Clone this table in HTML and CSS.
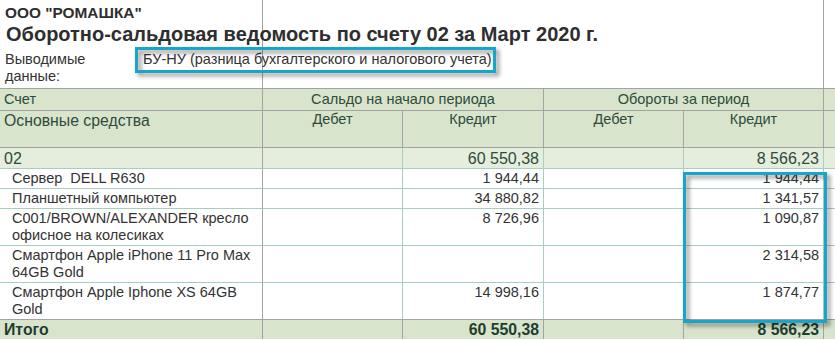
FILE: index.html
```html
<!DOCTYPE html>
<html lang="ru">
<head>
<meta charset="utf-8">
<title>Оборотно-сальдовая ведомость по счету 02</title>
<link rel="stylesheet" href="styles.css">
</head>
<body>
<div class="sheet">
  <div class="head">
    <div class="org">ООО "РОМАШКА"</div>
    <h1 class="title">Оборотно-сальдовая ведомость по счету 02 за Март 2020 г.</h1>
    <div class="params">
      <div class="param-label">Выводимые<br>данные:</div>
      <div class="param-value">БУ-НУ (разница бухгалтерского и налогового учета)</div>
    </div>
  </div>
  <table class="report">
    <colgroup>
      <col class="c-name"><col class="c-num"><col class="c-num2"><col class="c-num"><col class="c-num"><col class="c-tail">
    </colgroup>
    <thead>
      <tr class="h1">
        <td>Счет</td>
        <td colspan="2" class="center">Сальдо на начало периода</td>
        <td colspan="2" class="center">Обороты за период</td>
        <td></td>
      </tr>
      <tr class="h2">
        <td class="section">Основные средства</td>
        <td class="center">Дебет</td>
        <td class="center">Кредит</td>
        <td class="center">Дебет</td>
        <td class="center">Кредит</td>
        <td></td>
      </tr>
    </thead>
    <tbody>
      <tr class="group">
        <td>02</td><td></td><td class="num">60 550,38</td><td></td><td class="num">8 566,23</td><td></td>
      </tr>
      <tr>
        <td class="item">Сервер&nbsp; DELL R630</td><td></td><td class="num">1 944,44</td><td></td><td class="num">1 944,44</td><td></td>
      </tr>
      <tr>
        <td class="item">Планшетный компьютер</td><td></td><td class="num">34 880,82</td><td></td><td class="num">1 341,57</td><td></td>
      </tr>
      <tr>
        <td class="item">C001/BROWN/ALEXANDER кресло офисное на колесиках</td><td></td><td class="num">8 726,96</td><td></td><td class="num">1 090,87</td><td></td>
      </tr>
      <tr>
        <td class="item">Смартфон Apple iPhone 11 Pro Max 64GB Gold</td><td></td><td class="num"></td><td></td><td class="num">2 314,58</td><td></td>
      </tr>
      <tr>
        <td class="item">Смартфон Apple Iphone XS 64GB Gold</td><td></td><td class="num">14 998,16</td><td></td><td class="num">1 874,77</td><td></td>
      </tr>
    </tbody>
    <tfoot>
      <tr class="total">
        <td>Итого</td><td></td><td class="num">60 550,38</td><td></td><td class="num">8 566,23</td><td></td>
      </tr>
    </tfoot>
  </table>
  <div class="mark mark-param"></div>
  <div class="mark mark-credit"></div>
</div>
</body>
</html>
```
FILE: styles.css
```css
html, body {
  margin: 0;
  padding: 0;
  background: #ffffff;
  overflow: hidden;
}

body {
  font-family: "Liberation Sans", Arial, sans-serif;
  font-size: 14.5px;
  color: #333333;
}

.sheet {
  position: relative;
  width: 835px;
}

.head {
  box-sizing: border-box;
  height: 88px;
  padding: 4px 0 0 5px;
  background-image:
    linear-gradient(#a3a3a3, #a3a3a3),
    linear-gradient(#a3a3a3, #a3a3a3);
  background-size: 1px 100%, 1px 100%;
  background-position: 262px 0, 823px 0;
  background-repeat: no-repeat;
}

.org {
  font-weight: bold;
  font-size: 15.4px;
  line-height: 18px;
  color: #2e2e2e;
}

.title {
  margin: 1px 0 0 1px;
  font-size: 20px;
  line-height: 22px;
  font-weight: bold;
  color: #2e2e2e;
}

.params {
  display: flex;
  margin-top: 6px;
  line-height: 17px;
}

.param-label {
  width: 138px;
  flex: none;
}

.report {
  width: 835px;
  table-layout: fixed;
  border-collapse: separate;
  border-spacing: 0;
  border-top: 1px solid #a3a3a3;
}

.c-name { width: 263px; }
.c-num { width: 140px; }
.c-num2 { width: 141px; }
.c-tail { width: 11px; }

.report td {
  padding: 1px 4px 1px 4px;
  line-height: 17px;
  vertical-align: top;
  border-right: 1px solid #a8cdc1;
  border-bottom: 1px solid #a8cdc1;
  white-space: normal;
  overflow: hidden;
}

.report td:first-child {
  border-right-color: #a3a3a3;
}

.report td:last-child {
  border-right: none;
}

.report thead td {
  background: #d9e4cc;
  color: #2d4b3c;
  border-color: #a3a3a3;
}

.report .h1 td {
  padding-top: 2px;
  padding-bottom: 2px;
}

.report .h2 td {
  height: 37px;
  box-sizing: border-box;
  padding-top: 0;
}

.report .h2 td.section {
  font-size: 15.8px;
  line-height: 19px;
}

.report .group td {
  background: #e5eedc;
  color: #2d4b3c;
  font-size: 16px;
  padding-top: 2px;
  padding-bottom: 1px;
  height: 21px;
  box-sizing: border-box;
}

.report .total td {
  background: #d9e4cc;
  color: #1e3e2e;
  font-size: 15.8px;
  font-weight: bold;
  border-bottom: none;
  border-top: 1px solid #a3a3a3;
  border-right-color: #a3a3a3;
}

.report tbody tr:last-child td {
  border-bottom: none;
}

.center {
  text-align: center;
}

.report td.num {
  text-align: right;
}

.report td.item {
  padding-left: 12px;
}

.mark {
  position: absolute;
  box-sizing: border-box;
  border: 3px solid #17a6c9;
  filter: drop-shadow(3px 3px 2px rgba(0, 0, 0, 0.45));
  pointer-events: none;
}

.mark-param {
  left: 135px;
  top: 47px;
  width: 361px;
  height: 26px;
}

.mark-credit {
  left: 683px;
  top: 172px;
  width: 144px;
  height: 151px;
}
```
